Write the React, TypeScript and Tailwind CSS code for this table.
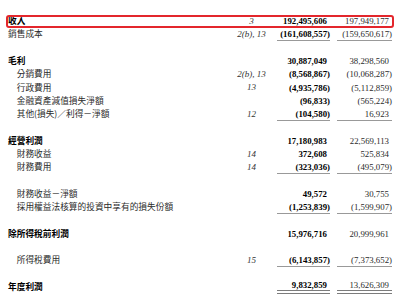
import React from 'react'

type Row = {
  label?: string
  bold?: boolean
  indent?: boolean
  note?: string
  cur?: string
  prev?: string
  line?: 'single' | 'double'
  boxed?: boolean
}

const rows: Row[] = [
  { label: '收入', bold: true, note: '3', cur: '192,495,606', prev: '197,949,177', boxed: true },
  { label: '銷售成本', note: '2(b), 13', cur: '(161,608,557)', prev: '(159,650,617)', line: 'single' },
  {},
  { label: '毛利', bold: true, cur: '30,887,049', prev: '38,298,560' },
  { label: '分銷費用', indent: true, note: '2(b), 13', cur: '(8,568,867)', prev: '(10,068,287)' },
  { label: '行政費用', indent: true, note: '13', cur: '(4,935,786)', prev: '(5,112,859)' },
  { label: '金融資產減值損失淨額', indent: true, cur: '(96,833)', prev: '(565,224)' },
  { label: '其他(損失)／利得－淨額', indent: true, note: '12', cur: '(104,580)', prev: '16,923', line: 'single' },
  {},
  { label: '經營利潤', bold: true, cur: '17,180,983', prev: '22,569,113' },
  { label: '財務收益', indent: true, note: '14', cur: '372,608', prev: '525,834' },
  { label: '財務費用', indent: true, note: '14', cur: '(323,036)', prev: '(495,079)', line: 'single' },
  {},
  { label: '財務收益－淨額', indent: true, cur: '49,572', prev: '30,755' },
  { label: '採用權益法核算的投資中享有的損失份額', indent: true, cur: '(1,253,839)', prev: '(1,599,907)', line: 'single' },
  {},
  { label: '除所得稅前利潤', bold: true, cur: '15,976,716', prev: '20,999,961' },
  {},
  { label: '所得稅費用', indent: true, note: '15', cur: '(6,143,857)', prev: '(7,373,652)', line: 'single' },
  {},
  { label: '年度利潤', bold: true, cur: '9,832,859', prev: '13,626,309', line: 'double' },
]

const serif = "font-['Liberation_Serif','Times_New_Roman',serif]"
const cjk = "font-['Noto_Sans_CJK_TC','Noto_Sans_CJK_SC',sans-serif]"

const Num = ({ value, className }: { value?: string; className: string }) => {
  if (!value) return null
  const neg = value.startsWith('(')
  return <span className={`${className} ${neg ? '' : 'pr-[3px]'}`}>{value}</span>
}

export default function App() {
  return (
    <div className="w-[400px] h-[300px] bg-white px-[6px] pt-[14.8px] overflow-hidden">
      {rows.map((r, i) => {
        const lineCls =
          r.line === 'single'
            ? 'border-b-[1.5px] border-[#999999]'
            : r.line === 'double'
              ? 'border-b-4 border-double border-[#7c7c7c]'
              : ''
        return (
          <div
            key={i}
            className={`flex items-center h-[13.3px] px-[2px] rounded-[3px] ${
              r.boxed ? 'outline-2 -outline-offset-2 outline-[#e3262c]' : ''
            }`}
          >
            <div
              className={`w-[223px] ${cjk} text-[8.7px] leading-none whitespace-nowrap ${
                r.indent ? 'pl-[8.7px]' : ''
              } ${r.bold ? 'font-bold text-black' : 'text-[#2a2a2a]'}`}
            >
              {r.label}
            </div>
            <div className={`w-[41px] text-center ${serif} italic text-[9px] leading-none text-[#333]`}>
              {r.note}
            </div>
            <div className={`w-[53px] ml-[5px] h-full flex items-center justify-end ${lineCls}`}>
              <Num value={r.cur} className={`${serif} font-bold text-[8.8px] leading-none text-black`} />
            </div>
            <div className={`w-[55px] ml-[7px] h-full flex items-center justify-end ${lineCls}`}>
              <Num value={r.prev} className={`${serif} text-[8.8px] leading-none text-[#2b2b2b]`} />
            </div>
          </div>
        )
      })}
    </div>
  )
}
